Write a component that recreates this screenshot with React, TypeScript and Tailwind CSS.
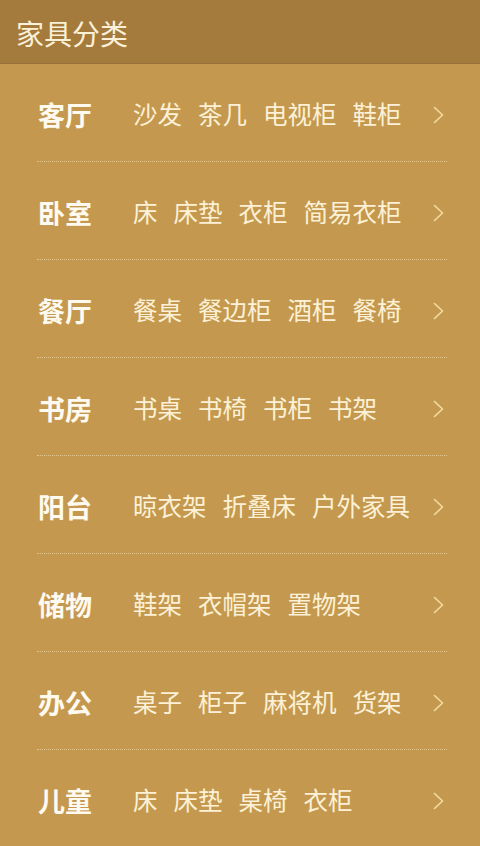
import React from "react";

const rows: { name: string; items: string[] }[] = [
  { name: "客厅", items: ["沙发", "茶几", "电视柜", "鞋柜"] },
  { name: "卧室", items: ["床", "床垫", "衣柜", "简易衣柜"] },
  { name: "餐厅", items: ["餐桌", "餐边柜", "酒柜", "餐椅"] },
  { name: "书房", items: ["书桌", "书椅", "书柜", "书架"] },
  { name: "阳台", items: ["晾衣架", "折叠床", "户外家具"] },
  { name: "储物", items: ["鞋架", "衣帽架", "置物架"] },
  { name: "办公", items: ["桌子", "柜子", "麻将机", "货架"] },
  { name: "儿童", items: ["床", "床垫", "桌椅", "衣柜"] },
];

function Chevron() {
  return (
    <svg width="11" height="18" viewBox="0 0 11 18" fill="none">
      <polyline points="1.5,1.5 9.5,9 1.5,16.5" stroke="#f4dc9f" strokeWidth="1.6" strokeLinecap="round" strokeLinejoin="round" />
    </svg>
  );
}

export default function App() {
  return (
    <div
      className="w-[480px] h-[846px] overflow-hidden bg-[#c4994f] flex flex-col"
      style={{ fontFamily: '"Noto Sans CJK SC", "Noto Sans", sans-serif' }}
    >
      <div className="h-[64px] shrink-0 bg-[#a47b3d] border-b border-[#98723a] flex items-center pl-[16px]">
        <span className="text-[28px] leading-none text-[#fbf1d9] font-normal pt-[3px]">家具分类</span>
      </div>
      <div className="flex flex-col pl-[37px] pr-[33px]">
        {rows.map((r) => (
          <div
            key={r.name}
            className="h-[98px] shrink-0 flex items-center border-b border-dotted border-[#e2c58e] pt-[4px]"
          >
            <div className="w-[96px] pl-[1px] text-[27px] font-bold leading-none text-[#fffaf0]">{r.name}</div>
            <div className="flex-1 flex gap-[16px] text-[24.5px] leading-none text-[#fcf1d6]">
              {r.items.map((it) => (
                <span key={it}>{it}</span>
              ))}
            </div>
            <div className="w-[14px] flex justify-start pr-[2px]">
              <Chevron />
            </div>
          </div>
        ))}
      </div>
    </div>
  );
}
